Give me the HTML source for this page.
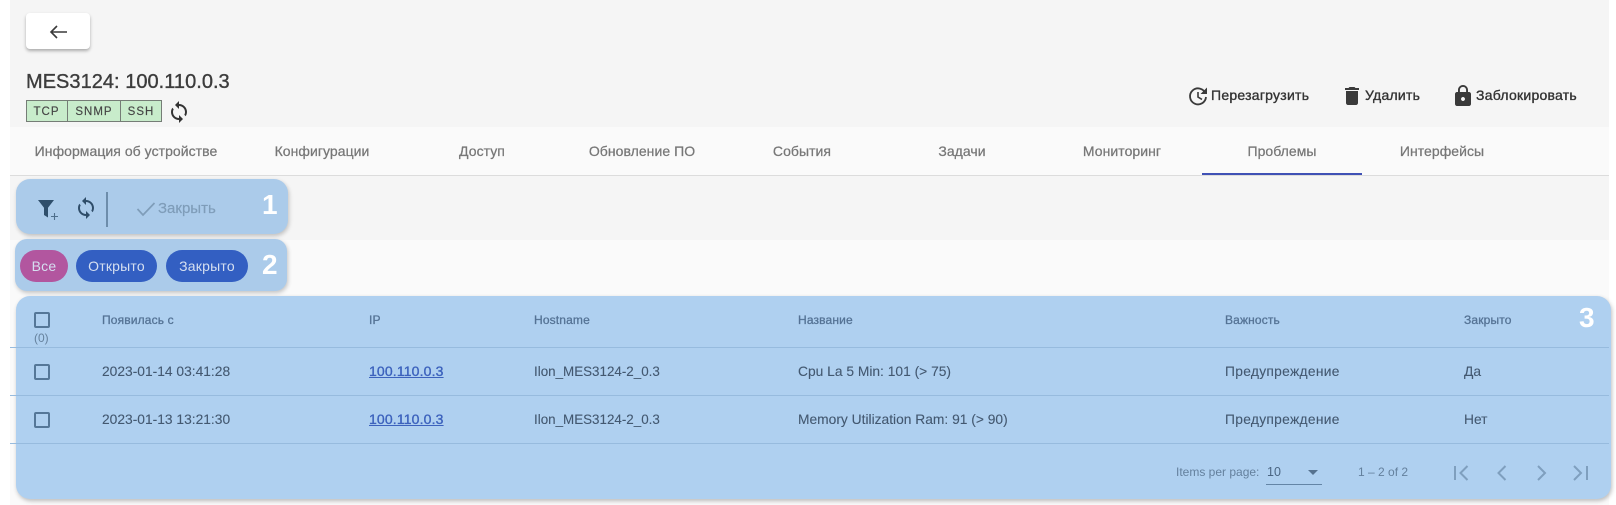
<!DOCTYPE html>
<html lang="ru"><head><meta charset="utf-8"><title>MES3124</title>
<style>
html,body{margin:0;padding:0;width:1616px;height:505px;overflow:hidden;background:#fff}
body{position:relative;font-family:"Liberation Sans",Arial,sans-serif;color:#333}
.a{position:absolute}
.t{position:absolute;white-space:nowrap;line-height:16px}
.tab{font-size:14px;letter-spacing:.05px;color:#777;top:143px;width:160px;text-align:center;-webkit-text-stroke:.25px #777}
.act{font-size:14px;letter-spacing:.25px;color:#333;top:87px;-webkit-text-stroke:.35px #333}
.hd{font-size:12px;letter-spacing:.15px;color:#557395;top:312px;-webkit-text-stroke:.3px #557395}
.c{font-size:13.8px;color:#435870;-webkit-text-stroke:.1px #435870}
.r1{top:364px}.r2{top:411.500px}
.ru{letter-spacing:.3px}
.host{font-size:13.4px}
.lk{color:#3c62bd;text-decoration:underline;font-size:14px;letter-spacing:.15px;-webkit-text-stroke:.35px #3c62bd}
.cb{position:absolute;width:12px;height:12px;border:2px solid #557798;border-radius:2px;left:34px}
.pill{position:absolute;top:250px;height:32px;border-radius:16px;color:#d5dff0;font-size:14px;letter-spacing:.2px;line-height:32px;text-align:center}
.num{position:absolute;color:#fff;font-weight:700;font-size:28px;line-height:30px}
.ln{position:absolute;left:10px;width:1599px;height:1px;background:#97bbde}
svg{position:absolute;overflow:visible}
</style></head><body>
<div class="a" style="left:10px;top:0;width:1599px;height:127px;background:#f5f5f5"></div>
<div class="a" style="left:10px;top:127px;width:1599px;height:48px;background:#fafafa"></div>
<div class="a" style="left:10px;top:175px;width:1599px;height:1px;background:#dcdcdc"></div>
<div class="a" style="left:10px;top:176px;width:1599px;height:64px;background:#f5f5f5"></div>
<div class="a" style="left:10px;top:240px;width:1599px;height:265px;background:#fafafa"></div>

<div class="a" style="left:26px;top:13px;width:64px;height:36px;background:#fff;border-radius:4px;box-shadow:0 2px 3px rgba(0,0,0,.3)"></div>
<svg style="left:49px;top:24px" width="18" height="16" viewBox="0 0 18 16"><path d="M18 8H2M8 2L2 8l6 6" fill="none" stroke="#3a3a3a" stroke-width="1.6"/></svg>

<div class="t" style="left:26px;top:71px;font-size:20px;letter-spacing:.03px;line-height:22px;color:#3c3c3c;-webkit-text-stroke:.35px #3c3c3c">MES3124: 100.110.0.3</div>

<div class="a" style="left:26px;top:100px;width:136px;height:22px;background:#c8eccb;border:1px solid #757d76;box-sizing:border-box"></div>
<div class="a" style="left:67px;top:100px;width:1px;height:22px;background:#757d76"></div>
<div class="a" style="left:120px;top:100px;width:1px;height:22px;background:#757d76"></div>
<div class="t" style="left:26px;top:104px;width:41px;text-align:center;font-size:11.5px;letter-spacing:1px;color:#444;-webkit-text-stroke:.15px #444">TCP</div>
<div class="t" style="left:68px;top:104px;width:52px;text-align:center;font-size:11.5px;letter-spacing:1px;color:#444;-webkit-text-stroke:.15px #444">SNMP</div>
<div class="t" style="left:121px;top:104px;width:40px;text-align:center;font-size:11.5px;letter-spacing:1px;color:#444;-webkit-text-stroke:.15px #444">SSH</div>
<svg style="left:167px;top:100px" width="24" height="24" viewBox="0 0 24 24"><path fill="#333" d="M12 4V1L8 5l4 4V6c3.31 0 6 2.69 6 6 0 1.01-.25 1.97-.7 2.8l1.46 1.46A7.93 7.93 0 0 0 20 12c0-4.42-3.58-8-8-8zm0 14c-3.31 0-6-2.69-6-6 0-1.01.25-1.97.7-2.8L5.24 7.74A7.93 7.93 0 0 0 4 12c0 4.42 3.58 8 8 8v3l4-4-4-4v3z"/></svg>

<svg style="left:1186px;top:84px" width="24" height="24" viewBox="0 0 24 24"><path fill="none" stroke="#3a3a3a" stroke-width="1.8" d="M19.5 9.5A8 8 0 1 0 20 13"/><path fill="#3a3a3a" d="M21 3.5V10h-6.5z"/><path fill="none" stroke="#3a3a3a" stroke-width="1.6" d="M12 8v5l4 2.4"/></svg>
<div class="t act" style="left:1211px">Перезагрузить</div>
<svg style="left:1340px;top:84px" width="24" height="24" viewBox="0 0 24 24"><path fill="#3a3a3a" d="M6 19c0 1.100.9 2 2 2h8c1.100 0 2-.9 2-2V7H6v12zM19 4h-3.500l-1-1h-5l-1 1H5v2h14V4z"/></svg>
<div class="t act" style="left:1365px">Удалить</div>
<svg style="left:1451px;top:84px" width="24" height="24" viewBox="0 0 24 24"><path fill="#3a3a3a" d="M18 8h-1V6c0-2.760-2.240-5-5-5S7 3.240 7 6v2H6c-1.100 0-2 .9-2 2v10c0 1.100.9 2 2 2h12c1.100 0 2-.9 2-2V10c0-1.100-.9-2-2-2zm-6 9c-1.100 0-2-.9-2-2s.9-2 2-2 2 .9 2 2-.9 2-2 2zm3.100-9H8.900V6c0-1.710 1.390-3.100 3.100-3.100s3.100 1.390 3.100 3.100v2z"/></svg>
<div class="t act" style="left:1476px">Заблокировать</div>

<div class="t tab" style="left:10px;width:232px">Информация об устройстве</div>
<div class="t tab" style="left:242px">Конфигурации</div>
<div class="t tab" style="left:402px">Доступ</div>
<div class="t tab" style="left:562px">Обновление ПО</div>
<div class="t tab" style="left:722px">События</div>
<div class="t tab" style="left:882px">Задачи</div>
<div class="t tab" style="left:1042px">Мониторинг</div>
<div class="t tab" style="left:1202px">Проблемы</div>
<div class="t tab" style="left:1362px">Интерфейсы</div>
<div class="a" style="left:1202px;top:173px;width:160px;height:2px;background:#3f51b5"></div>

<div class="a" style="left:16px;top:179px;width:272px;height:55px;background:#abcbea;border-radius:14px;box-shadow:1px 2px 4px rgba(0,0,0,.22)"></div>
<svg style="left:37px;top:199px" width="24" height="24" viewBox="0 0 24 24"><path fill="#2f4f6c" d="M1 1h16l-6 7.800V18.500l-4-2.500V8.800z"/><path stroke="#4f6f8c" stroke-width="1.100" d="M14 17.500h7M17.500 14v7"/></svg>
<svg style="left:74px;top:196px" width="24" height="24" viewBox="0 0 24 24"><path fill="#2f4d69" d="M12 4V1L8 5l4 4V6c3.310 0 6 2.690 6 6 0 1.010-.25 1.970-.7 2.800l1.460 1.460A7.930 7.930 0 0 0 20 12c0-4.420-3.580-8-8-8zm0 14c-3.310 0-6-2.690-6-6 0-1.010.25-1.970.7-2.800L5.240 7.740A7.930 7.930 0 0 0 4 12c0 4.420 3.580 8 8 8v3l4-4-4-4v3z"/></svg>
<div class="a" style="left:106px;top:192px;width:2px;height:35px;background:#6d8dab"></div>
<svg style="left:136px;top:200px" width="20" height="18" viewBox="0 0 20 18"><path d="M1.500 9l5.500 6L18.500 3" fill="none" stroke="#7f9db9" stroke-width="1.700"/></svg>
<div class="t" style="left:158px;top:200.500px;font-size:15px;color:#7f9db9;-webkit-text-stroke:.2px #7f9db9">Закрыть</div>
<div class="num" style="left:262px;top:190px">1</div>

<div class="a" style="left:15px;top:239px;width:272px;height:52px;background:#abcbea;border-radius:12px;box-shadow:1px 2px 4px rgba(0,0,0,.22)"></div>
<div class="pill" style="left:20px;width:48px;background:#b2569f">Все</div>
<div class="pill" style="left:76px;width:81px;background:#335fc2">Открыто</div>
<div class="pill" style="left:166px;width:82px;background:#335fc2">Закрыто</div>
<div class="num" style="left:262px;top:250px">2</div>

<div class="a" style="left:16px;top:296px;width:1595px;height:203px;background:#afd0f0;border-radius:14px;box-shadow:1px 2px 4px rgba(0,0,0,.25)"></div>
<div class="ln" style="top:347px"></div>
<div class="ln" style="top:395px"></div>
<div class="ln" style="top:443px"></div>
<div class="num" style="left:1579px;top:303px">3</div>

<div class="cb" style="top:312px"></div>
<div class="t" style="left:34px;top:330px;font-size:12px;color:#66829e">(0)</div>
<div class="t hd" style="left:102px">Появилась с</div>
<div class="t hd" style="left:369px">IP</div>
<div class="t hd" style="left:534px">Hostname</div>
<div class="t hd" style="left:798px">Название</div>
<div class="t hd" style="left:1225px">Важность</div>
<div class="t hd" style="left:1464px">Закрыто</div>

<div class="cb" style="top:364px"></div>
<div class="t c r1" style="left:102px">2023-01-14 03:41:28</div>
<div class="t c lk" style="left:369px;top:363px">100.110.0.3</div>
<div class="t c r1 host" style="left:534px">Ilon_MES3124-2_0.3</div>
<div class="t c r1" style="left:798px">Cpu La 5 Min: 101 (&gt; 75)</div>
<div class="t c r1 ru" style="left:1225px">Предупреждение</div>
<div class="t c r1" style="left:1464px">Да</div>

<div class="cb" style="top:412px"></div>
<div class="t c r2" style="left:102px">2023-01-13 13:21:30</div>
<div class="t c lk" style="left:369px;top:411px">100.110.0.3</div>
<div class="t c r2 host" style="left:534px">Ilon_MES3124-2_0.3</div>
<div class="t c r2" style="left:798px">Memory Utilization Ram: 91 (&gt; 90)</div>
<div class="t c r2 ru" style="left:1225px">Предупреждение</div>
<div class="t c r2" style="left:1464px">Нет</div>

<div class="t" style="left:1176px;top:464px;font-size:12px;color:#64809d">Items per page:</div>
<div class="t" style="left:1267px;top:464px;font-size:12.5px;color:#4a6582">10</div>
<div class="a" style="left:1266px;top:484px;width:56px;height:1px;background:#6485a6"></div>
<svg style="left:1307px;top:469px" width="12" height="7" viewBox="0 0 12 7"><path fill="#56728f" d="M1 1h10L6 6z"/></svg>
<div class="t" style="left:1358px;top:464px;font-size:12px;color:#64809d">1 – 2 of 2</div>
<svg style="left:1450px;top:463px" width="140" height="20" viewBox="0 0 140 20"><g fill="none" stroke="#7f9fbe" stroke-width="2"><path d="M5 3v14M17.500 3l-7 7 7 7"/><path d="M55.500 3l-7 7 7 7"/><path d="M88 3l7 7-7 7"/><path d="M124 3l7 7-7 7M137 3v14"/></g></svg>
</body></html>
